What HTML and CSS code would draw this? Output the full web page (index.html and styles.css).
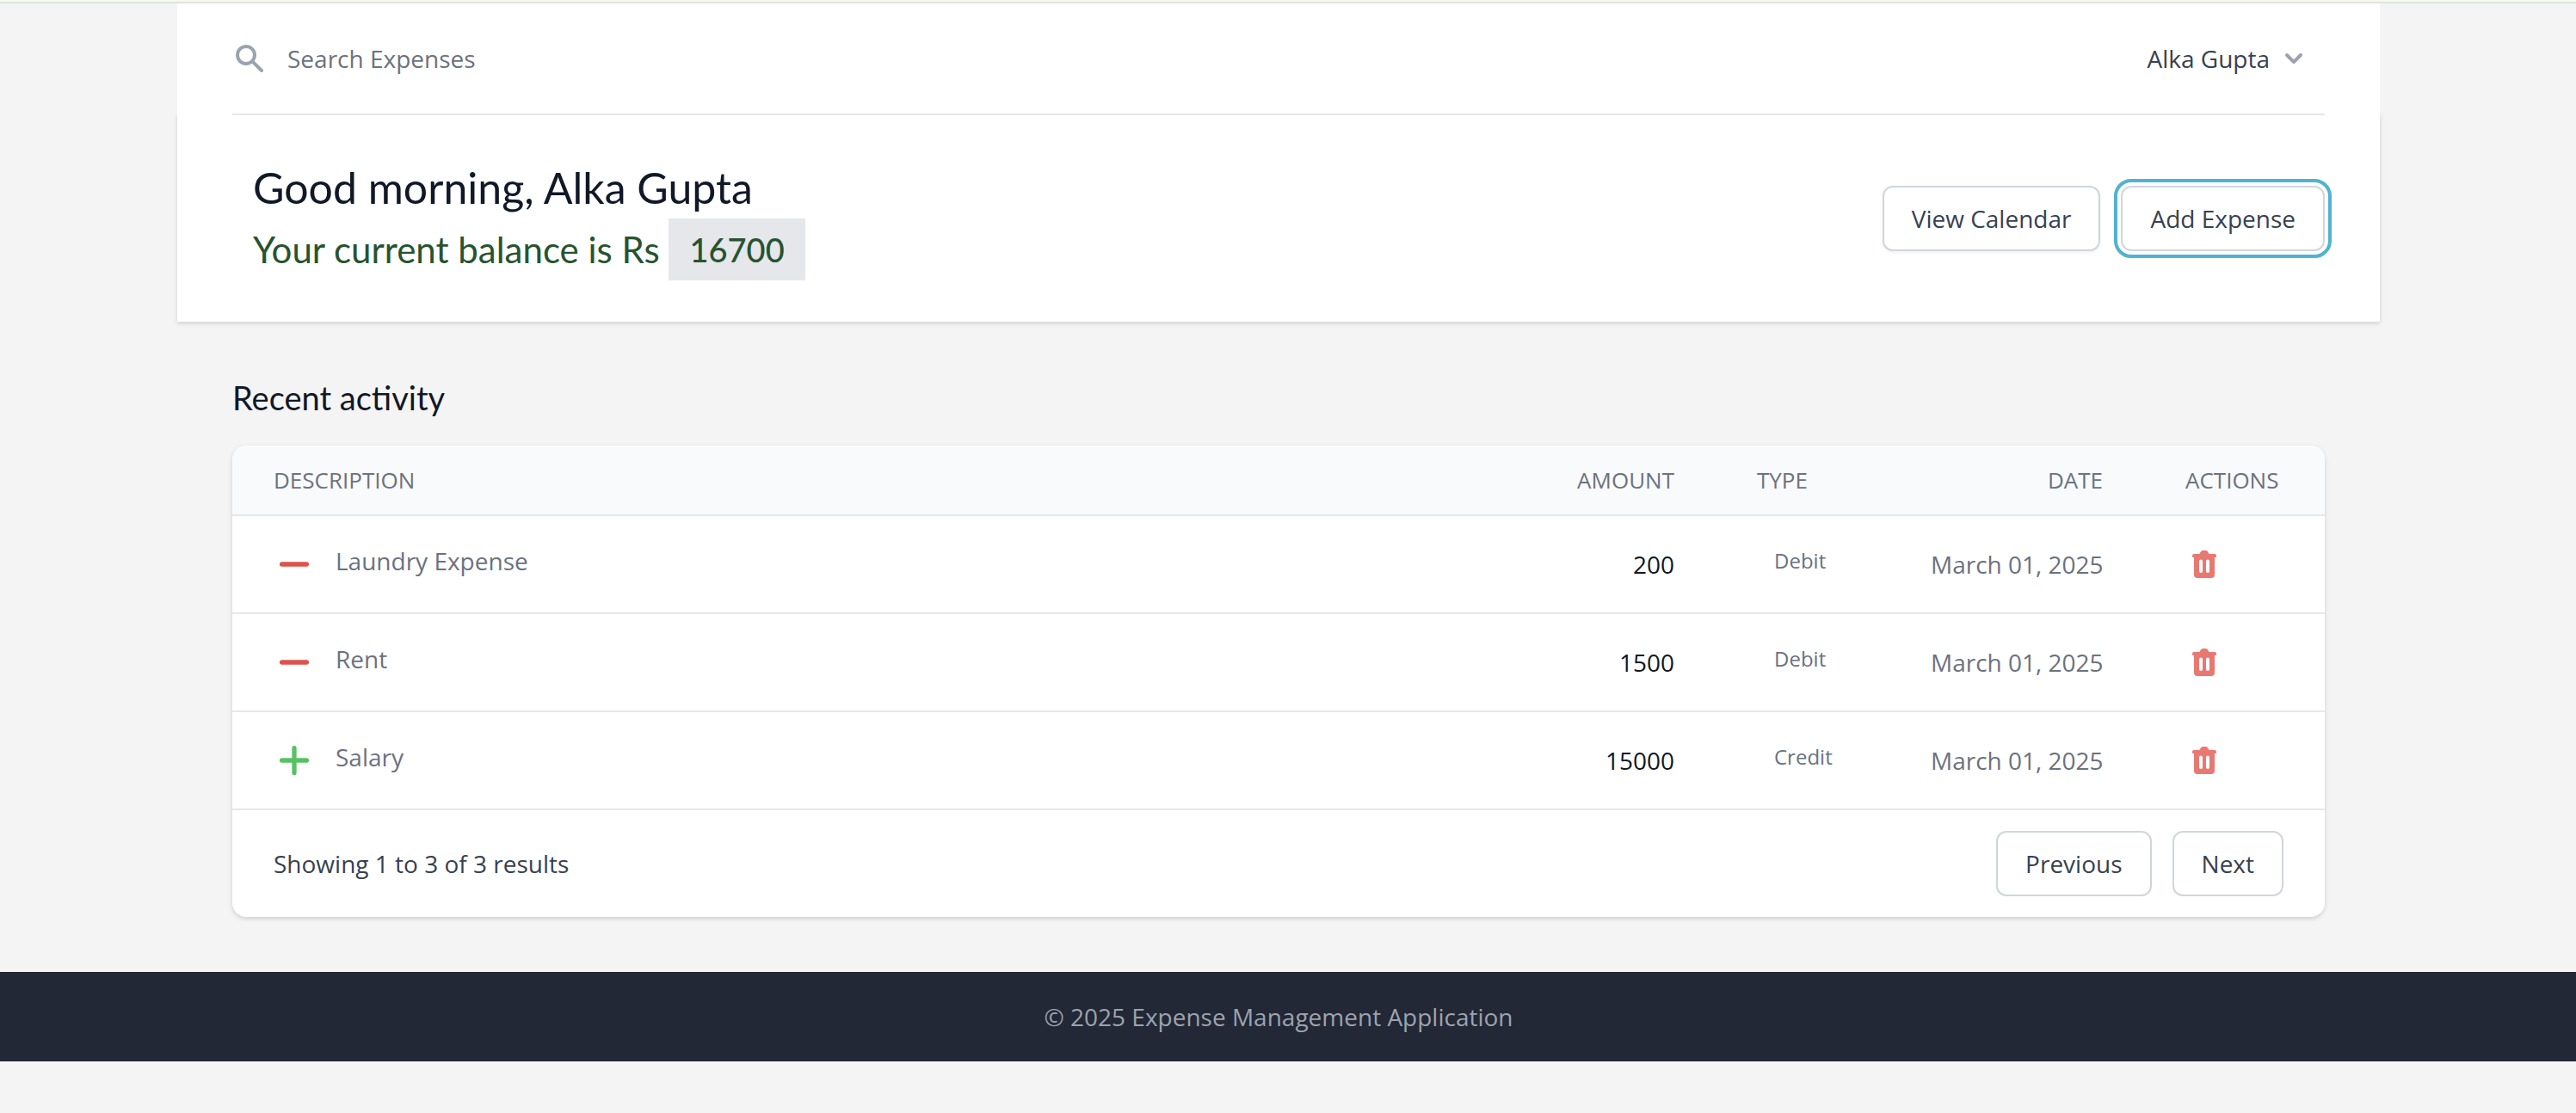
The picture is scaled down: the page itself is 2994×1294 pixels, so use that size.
FILE: index.html
```html
<!DOCTYPE html>
<html lang="en">
<head>
<meta charset="utf-8">
<title>Expense Management Application</title>
<meta name="viewport" content="width=device-width, initial-scale=1">
<link rel="stylesheet" href="styles.css">
</head>
<body>
<svg class="sprite" aria-hidden="true">
  <symbol id="minus" viewBox="0 0 20 20"><path d="M4 10h12" fill="none" stroke="currentColor" stroke-width="2.200" stroke-linecap="round"/></symbol>
  <symbol id="plus" viewBox="0 0 20 20"><path d="M4 10h12M10 4v12" fill="none" stroke="currentColor" stroke-width="2.200" stroke-linecap="round"/></symbol>
  <symbol id="trash" viewBox="0 0 28 32"><path fill="currentColor" fill-rule="evenodd" d="M8.500 4Q10 0 12.500 0h3Q18 0 19.500 4H26a2 2 0 0 1 2 2v1a1 1 0 0 1-1 1h-1v20a4 4 0 0 1-4 4H6a4 4 0 0 1-4-4V8H1a1 1 0 0 1-1-1V6a2 2 0 0 1 2-2zM8 12.500v11.500a2 2 0 0 0 4 0V12.500a2 2 0 0 0-4 0zm8 0v11.500a2 2 0 0 0 4 0V12.500a2 2 0 0 0-4 0z"/></symbol>
</svg>
<header class="topbar">
  <div class="container topbar-inner">
    <form class="search" role="search">
      <label for="search"><svg class="icon" viewBox="0 0 20 20" role="img" aria-label="Search"><path fill="currentColor" fill-rule="evenodd" clip-rule="evenodd" d="M8 4a4 4 0 100 8 4 4 0 000-8zM2 8a6 6 0 1110.890 3.476l4.817 4.817a1 1 0 01-1.414 1.414l-4.816-4.816A6 6 0 012 8z"/></svg></label>
      <input id="search" type="search" placeholder="Search Expenses">
    </form>
    <button class="account" type="button">Alka Gupta
      <svg class="icon" viewBox="0 0 20 20" aria-hidden="true"><path fill="currentColor" fill-rule="evenodd" clip-rule="evenodd" d="M5.293 7.293a1 1 0 011.414 0L10 10.586l3.293-3.293a1 1 0 111.414 1.414l-4 4a1 1 0 01-1.414 0l-4-4a1 1 0 010-1.414z"/></svg>
    </button>
  </div>
</header>
<main>
  <section class="container welcome">
    <div class="welcome-inner">
      <div class="greeting">
        <h1>Good morning, Alka Gupta</h1>
        <p class="balance">Your current balance is Rs <span class="balance-value">16700</span></p>
      </div>
      <div class="actions">
        <button class="btn btn-raised" type="button">View Calendar</button>
        <button class="btn btn-focused" type="button">Add Expense</button>
      </div>
    </div>
  </section>
  <section class="container activity">
    <h2>Recent activity</h2>
    <div class="card">
      <table>
        <colgroup><col><col class="col-amount"><col class="col-type"><col class="col-date"><col class="col-actions"></colgroup>
        <thead>
          <tr><th scope="col">DESCRIPTION</th><th scope="col" class="num">AMOUNT</th><th scope="col">TYPE</th><th scope="col" class="num">DATE</th><th scope="col">ACTIONS</th></tr>
        </thead>
        <tbody>
          <tr>
            <td><div class="item"><svg class="sign debit" aria-hidden="true"><use href="#minus"/></svg>Laundry Expense</div></td>
            <td class="num amount">200</td><td><span class="pill">Debit</span></td><td class="num">March 01, 2025</td>
            <td><button class="delete" type="button" aria-label="Delete Laundry Expense"><svg aria-hidden="true"><use href="#trash"/></svg></button></td>
          </tr>
          <tr>
            <td><div class="item"><svg class="sign debit" aria-hidden="true"><use href="#minus"/></svg>Rent</div></td>
            <td class="num amount">1500</td><td><span class="pill">Debit</span></td><td class="num">March 01, 2025</td>
            <td><button class="delete" type="button" aria-label="Delete Rent"><svg aria-hidden="true"><use href="#trash"/></svg></button></td>
          </tr>
          <tr>
            <td><div class="item"><svg class="sign credit" aria-hidden="true"><use href="#plus"/></svg>Salary</div></td>
            <td class="num amount">15000</td><td><span class="pill">Credit</span></td><td class="num">March 01, 2025</td>
            <td><button class="delete" type="button" aria-label="Delete Salary"><svg aria-hidden="true"><use href="#trash"/></svg></button></td>
          </tr>
        </tbody>
      </table>
      <nav class="pagination" aria-label="Pagination">
        <p>Showing 1 to 3 of 3 results</p>
        <div class="actions"><button class="btn" type="button">Previous</button><button class="btn" type="button">Next</button></div>
      </nav>
    </div>
  </section>
</main>
<footer class="footer">© 2025 Expense Management Application</footer>
</body>
</html>
```

FILE: styles.css
```css
:root {
  --gutter: 22px;
  --line: #e5e7eb;
  --muted: #6b7280;
  --text: #374151;
  --ink: #111827;
}

* { box-sizing: border-box; }

body {
  margin: 0;
  background: #f4f4f4;
  color: var(--muted);
  font-family: "Open Sans", "Noto Sans", sans-serif;
  font-size: 28px;
  line-height: 40px;
}

h1, h2, p { margin: 0; }
button, input { font: inherit; }
svg { display: block; }
.sprite { display: none; }

.topbar {
  position: relative;
  z-index: 1;
  border-top: 2px solid #f5f9ef;
  box-shadow: inset 0 2px #e0e5d8;
  padding: 2px var(--gutter) 0 0;
}

main { padding-right: var(--gutter); }

.container {
  max-width: 2560px;
  margin: 0 auto;
  padding: 0 64px;
}

.topbar-inner {
  display: flex;
  justify-content: space-between;
  align-items: center;
  min-height: 128px;
  background: #fff;
}

.icon { width: 40px; height: 40px; color: #9ca3af; }

.search { display: flex; flex: 1; align-items: center; gap: 24px; }

.search input {
  flex: 1;
  min-width: 0;
  padding: 0;
  border: 0;
  outline: 0;
  background: none;
  color: var(--ink);
}

.search input::placeholder { color: var(--muted); opacity: 1; }

.account {
  display: flex;
  align-items: center;
  gap: 8px;
  padding: 16px;
  border: 0;
  background: none;
  color: var(--text);
}

.welcome {
  background: #fff;
  box-shadow: 0 2px 6px rgba(0, 0, 0, .1), 0 2px 4px rgba(0, 0, 0, .06);
}

.welcome-inner {
  display: flex;
  justify-content: space-between;
  align-items: center;
  padding: 48px 0 48px 24px;
  border-top: 2px solid var(--line);
}

h1, h2, .balance { font-family: Lato, sans-serif; font-weight: 400; }
h1 { font-size: 50px; line-height: 72px; color: var(--ink); }
.balance { font-size: 42px; line-height: 72px; color: #27532f; }
.balance-value { display: inline-block; padding: 0 24px; background: var(--line); font-size: 38px; font-weight: 500; vertical-align: top; }

.actions { display: flex; gap: 24px; }

.btn {
  padding: 16px 32px;
  border: 2px solid #d1d5db;
  border-radius: 12px;
  background: #fff;
  color: var(--text);
}

.btn-raised { box-shadow: 0 2px 4px rgba(0, 0, 0, .05); }
.btn-focused { outline: 4px solid #50b3d0; outline-offset: 4px; }

.activity { padding-top: 64px; padding-bottom: 64px; }
h2 { font-size: 38px; line-height: 48px; color: var(--ink); }

.card {
  margin-top: 32px;
  overflow: hidden;
  border-radius: 16px;
  background: #fff;
  box-shadow: 0 2px 6px rgba(0, 0, 0, .1), 0 2px 4px rgba(0, 0, 0, .06);
}

table { width: 100%; border-collapse: separate; border-spacing: 0; table-layout: fixed; }
.col-amount { width: 210px; }
.col-type { width: 202px; }
.col-date { width: 296px; }
.col-actions { width: 210px; }

th {
  padding: 24px 48px;
  background: #f9fafb;
  font-size: 26px;
  font-weight: 400;
  line-height: 32px;
  text-align: left;
}

td { padding: 32px 48px; border-top: 2px solid var(--line); white-space: nowrap; }
.num { text-align: right; }
.amount { color: var(--ink); }

.item { display: flex; align-items: flex-start; gap: 24px; }
.sign { width: 48px; height: 48px; }
.debit { color: #e0524c; }
.credit { color: #57c264; }
.pill { display: block; min-height: 40px; padding: 0 20px; font-size: 24px; line-height: 32px; }

.delete { display: block; padding: 0 8px; border: 0; background: none; color: #e87972; }
.delete svg { width: 28px; height: 32px; }

.pagination {
  display: flex;
  justify-content: space-between;
  align-items: center;
  padding: 24px 48px;
  border-top: 2px solid var(--line);
  color: var(--text);
}

.footer {
  padding: 32px calc(32px + var(--gutter)) 32px 32px;
  background: #222835;
  color: #9ca3af;
  text-align: center;
}
```
